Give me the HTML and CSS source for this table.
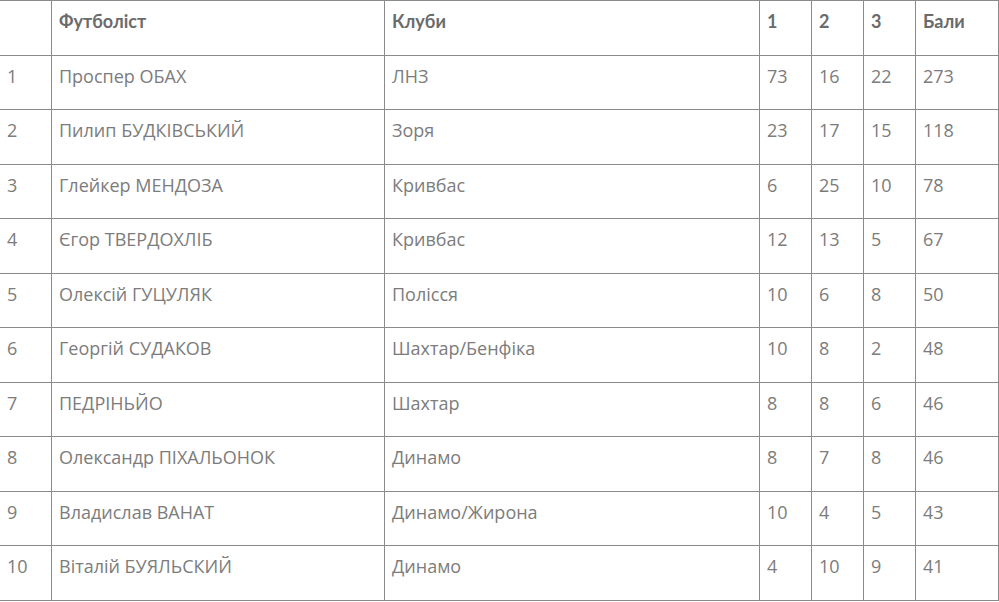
FILE: index.html
```html
<!DOCTYPE html>
<html lang="uk">
<head>
<meta charset="utf-8">
<link rel="stylesheet" href="styles.css">
</head>
<body>
<table class="rating">
  <colgroup>
    <col class="c-num"><col class="c-name"><col class="c-club"><col class="c-s"><col class="c-s"><col class="c-s"><col class="c-pts">
  </colgroup>
  <thead>
    <tr><th></th><th>Футболіст</th><th>Клуби</th><th>1</th><th>2</th><th>3</th><th>Бали</th></tr>
  </thead>
  <tbody>
    <tr><td>1</td><td>Проспер ОБАХ</td><td>ЛНЗ</td><td>73</td><td>16</td><td>22</td><td>273</td></tr>
    <tr><td>2</td><td>Пилип БУДКІВСЬКИЙ</td><td>Зоря</td><td>23</td><td>17</td><td>15</td><td>118</td></tr>
    <tr><td>3</td><td>Глейкер МЕНДОЗА</td><td>Кривбас</td><td>6</td><td>25</td><td>10</td><td>78</td></tr>
    <tr><td>4</td><td>Єгор ТВЕРДОХЛІБ</td><td>Кривбас</td><td>12</td><td>13</td><td>5</td><td>67</td></tr>
    <tr><td>5</td><td>Олексій ГУЦУЛЯК</td><td>Полісся</td><td>10</td><td>6</td><td>8</td><td>50</td></tr>
    <tr><td>6</td><td>Георгій СУДАКОВ</td><td>Шахтар/Бенфіка</td><td>10</td><td>8</td><td>2</td><td>48</td></tr>
    <tr><td>7</td><td>ПЕДРІНЬЙО</td><td>Шахтар</td><td>8</td><td>8</td><td>6</td><td>46</td></tr>
    <tr><td>8</td><td>Олександр ПІХАЛЬОНОК</td><td>Динамо</td><td>8</td><td>7</td><td>8</td><td>46</td></tr>
    <tr><td>9</td><td>Владислав ВАНАТ</td><td>Динамо/Жирона</td><td>10</td><td>4</td><td>5</td><td>43</td></tr>
    <tr><td>10</td><td>Віталій БУЯЛЬСКИЙ</td><td>Динамо</td><td>4</td><td>10</td><td>9</td><td>41</td></tr>
  </tbody>
</table>
</body>
</html>
```
FILE: styles.css
```css
html, body {
  margin: 0;
  padding: 0;
  background: #fff;
}
.rating {
  border-collapse: collapse;
  table-layout: fixed;
  width: 999px;
  margin-left: -1px;
  font-family: "Open Sans", "Noto Sans", sans-serif;
  font-size: 18px;
  color: #7c7c7c;
}
.c-num { width: 52px; }
.c-name { width: 333px; }
.c-club { width: 375px; }
.c-s { width: 52px; }
.c-pts { width: 83px; }
.rating th,
.rating td {
  border: 1px solid #8a8a8a;
  text-align: left;
  vertical-align: top;
  padding: 8px 7px 0;
  height: 54.5px;
  box-sizing: border-box;
  line-height: 25px;
  font-weight: 400;
}
.rating th {
  font-family: "Lato", "Open Sans", sans-serif;
  font-weight: 700;
  font-size: 18px;
  color: #6b6b6b;
  padding-top: 8px;
}
```
